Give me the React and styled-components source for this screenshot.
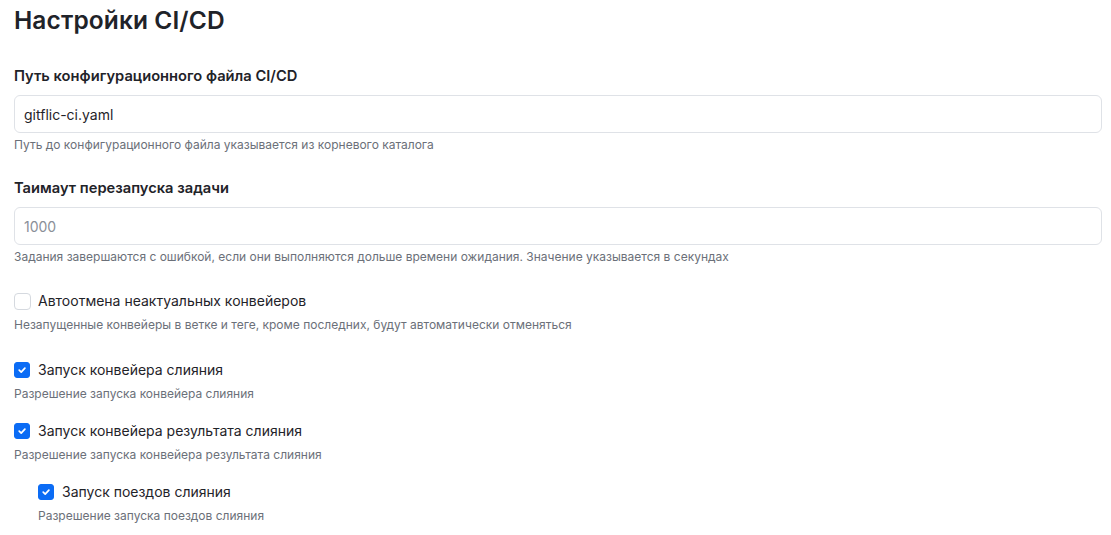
import React from "react";
import styled, { createGlobalStyle } from "styled-components";

const GlobalStyle = createGlobalStyle`
    body {
        margin: 0;
        background: #ffffff;
        font-family: Inter, "Noto Sans", sans-serif;
        color: #1f2329;
    }
`;

const Check = ({ checked }) => (
    <Box checked={checked}>
        {checked && (
            <svg width="10" height="10" viewBox="0 0 10 10">
                <path
                    d="M2.2 5.2 L4.2 7.1 L7.9 3.1"
                    fill="none"
                    stroke="#fff"
                    strokeWidth="1.7"
                    strokeLinecap="round"
                    strokeLinejoin="round"
                />
            </svg>
        )}
    </Box>
);

const CheckField = ({ checked, label, hint, nested, gap }) => (
    <CheckGroup nested={nested} gap={gap}>
        <CheckRow>
            <Check checked={checked} />
            <CheckLabel>{label}</CheckLabel>
        </CheckRow>
        <Hint>{hint}</Hint>
    </CheckGroup>
);

const App = () => {
    return (
        <Page>
            <GlobalStyle />
            <Title>Настройки CI/CD</Title>

            <Field gap={28}>
                <Label>Путь конфигурационного файла CI/CD</Label>
                <Input defaultValue="gitflic-ci.yaml" />
                <Hint>Путь до конфигурационного файла указывается из корневого каталога</Hint>
            </Field>

            <Field gap={25}>
                <Label>Таимаут перезапуска задачи</Label>
                <Input placeholder="1000" />
                <Hint>
                    Задания завершаются с ошибкой, если они выполняются дольше времени ожидания. Значение указывается в секундах
                </Hint>
            </Field>

            <CheckField
                gap={26}
                label="Автоотмена неактуальных конвейеров"
                hint="Незапущенные конвейеры в ветке и теге, кроме последних, будут автоматически отменяться"
            />
            <CheckField
                checked
                gap={27}
                label="Запуск конвейера слияния"
                hint="Разрешение запуска конвейера слияния"
            />
            <CheckField
                checked
                gap={19}
                label="Запуск конвейера результата слияния"
                hint="Разрешение запуска конвейера результата слияния"
            />
            <CheckField
                checked
                nested
                gap={19}
                label="Запуск поездов слияния"
                hint="Разрешение запуска поездов слияния"
            />
        </Page>
    );
};

export default App;

const Page = styled.div`
    padding: 2px 9px 10px 14px;
`;

const Title = styled.h1`
    margin: 0;
    font-size: 24.5px;
    line-height: 36px;
    font-weight: 600;
    color: #1f2329;
    letter-spacing: 0.1px;
`;

const Field = styled.div`
    display: flex;
    flex-direction: column;
    margin-top: ${(p) => p.gap}px;
`;

const Label = styled.label`
    font-size: 14.7px;
    line-height: 20px;
    font-weight: 600;
    color: #1f2329;
    margin-bottom: 9px;
`;

const Input = styled.input`
    box-sizing: border-box;
    width: 100%;
    height: 38px;
    padding: 0 9px;
    border: 1px solid #dfe2e7;
    border-radius: 6px;
    font-family: Inter, "Noto Sans", sans-serif;
    font-size: 14px;
    color: #1f2329;
    outline: none;
    &::placeholder {
        color: #8a8f98;
    }
`;

const Hint = styled.div`
    margin-top: 4px;
    font-size: 12px;
    line-height: 16px;
    color: #6b7079;
`;

const CheckGroup = styled.div`
    margin-top: ${(p) => p.gap}px;
    padding-left: ${(p) => (p.nested ? 24 : 0)}px;
    ${Hint} {
        margin-top: 6px;
    }
`;

const CheckRow = styled.div`
    display: flex;
    align-items: center;
    gap: 8px;
`;

const Box = styled.span`
    box-sizing: border-box;
    width: ${(p) => (p.checked ? 16 : 17)}px;
    height: ${(p) => (p.checked ? 16 : 17)}px;
    margin-right: ${(p) => (p.checked ? 0 : -1)}px;
    border-radius: ${(p) => (p.checked ? 3 : 4)}px;
    display: inline-flex;
    align-items: center;
    justify-content: center;
    background: ${(p) => (p.checked ? "#0b6cf5" : "#ffffff")};
    border: 1px solid ${(p) => (p.checked ? "#0b6cf5" : "#d5d9df")};
`;

const CheckLabel = styled.span`
    font-size: 14px;
    line-height: 20px;
    color: #1f2329;
`;
